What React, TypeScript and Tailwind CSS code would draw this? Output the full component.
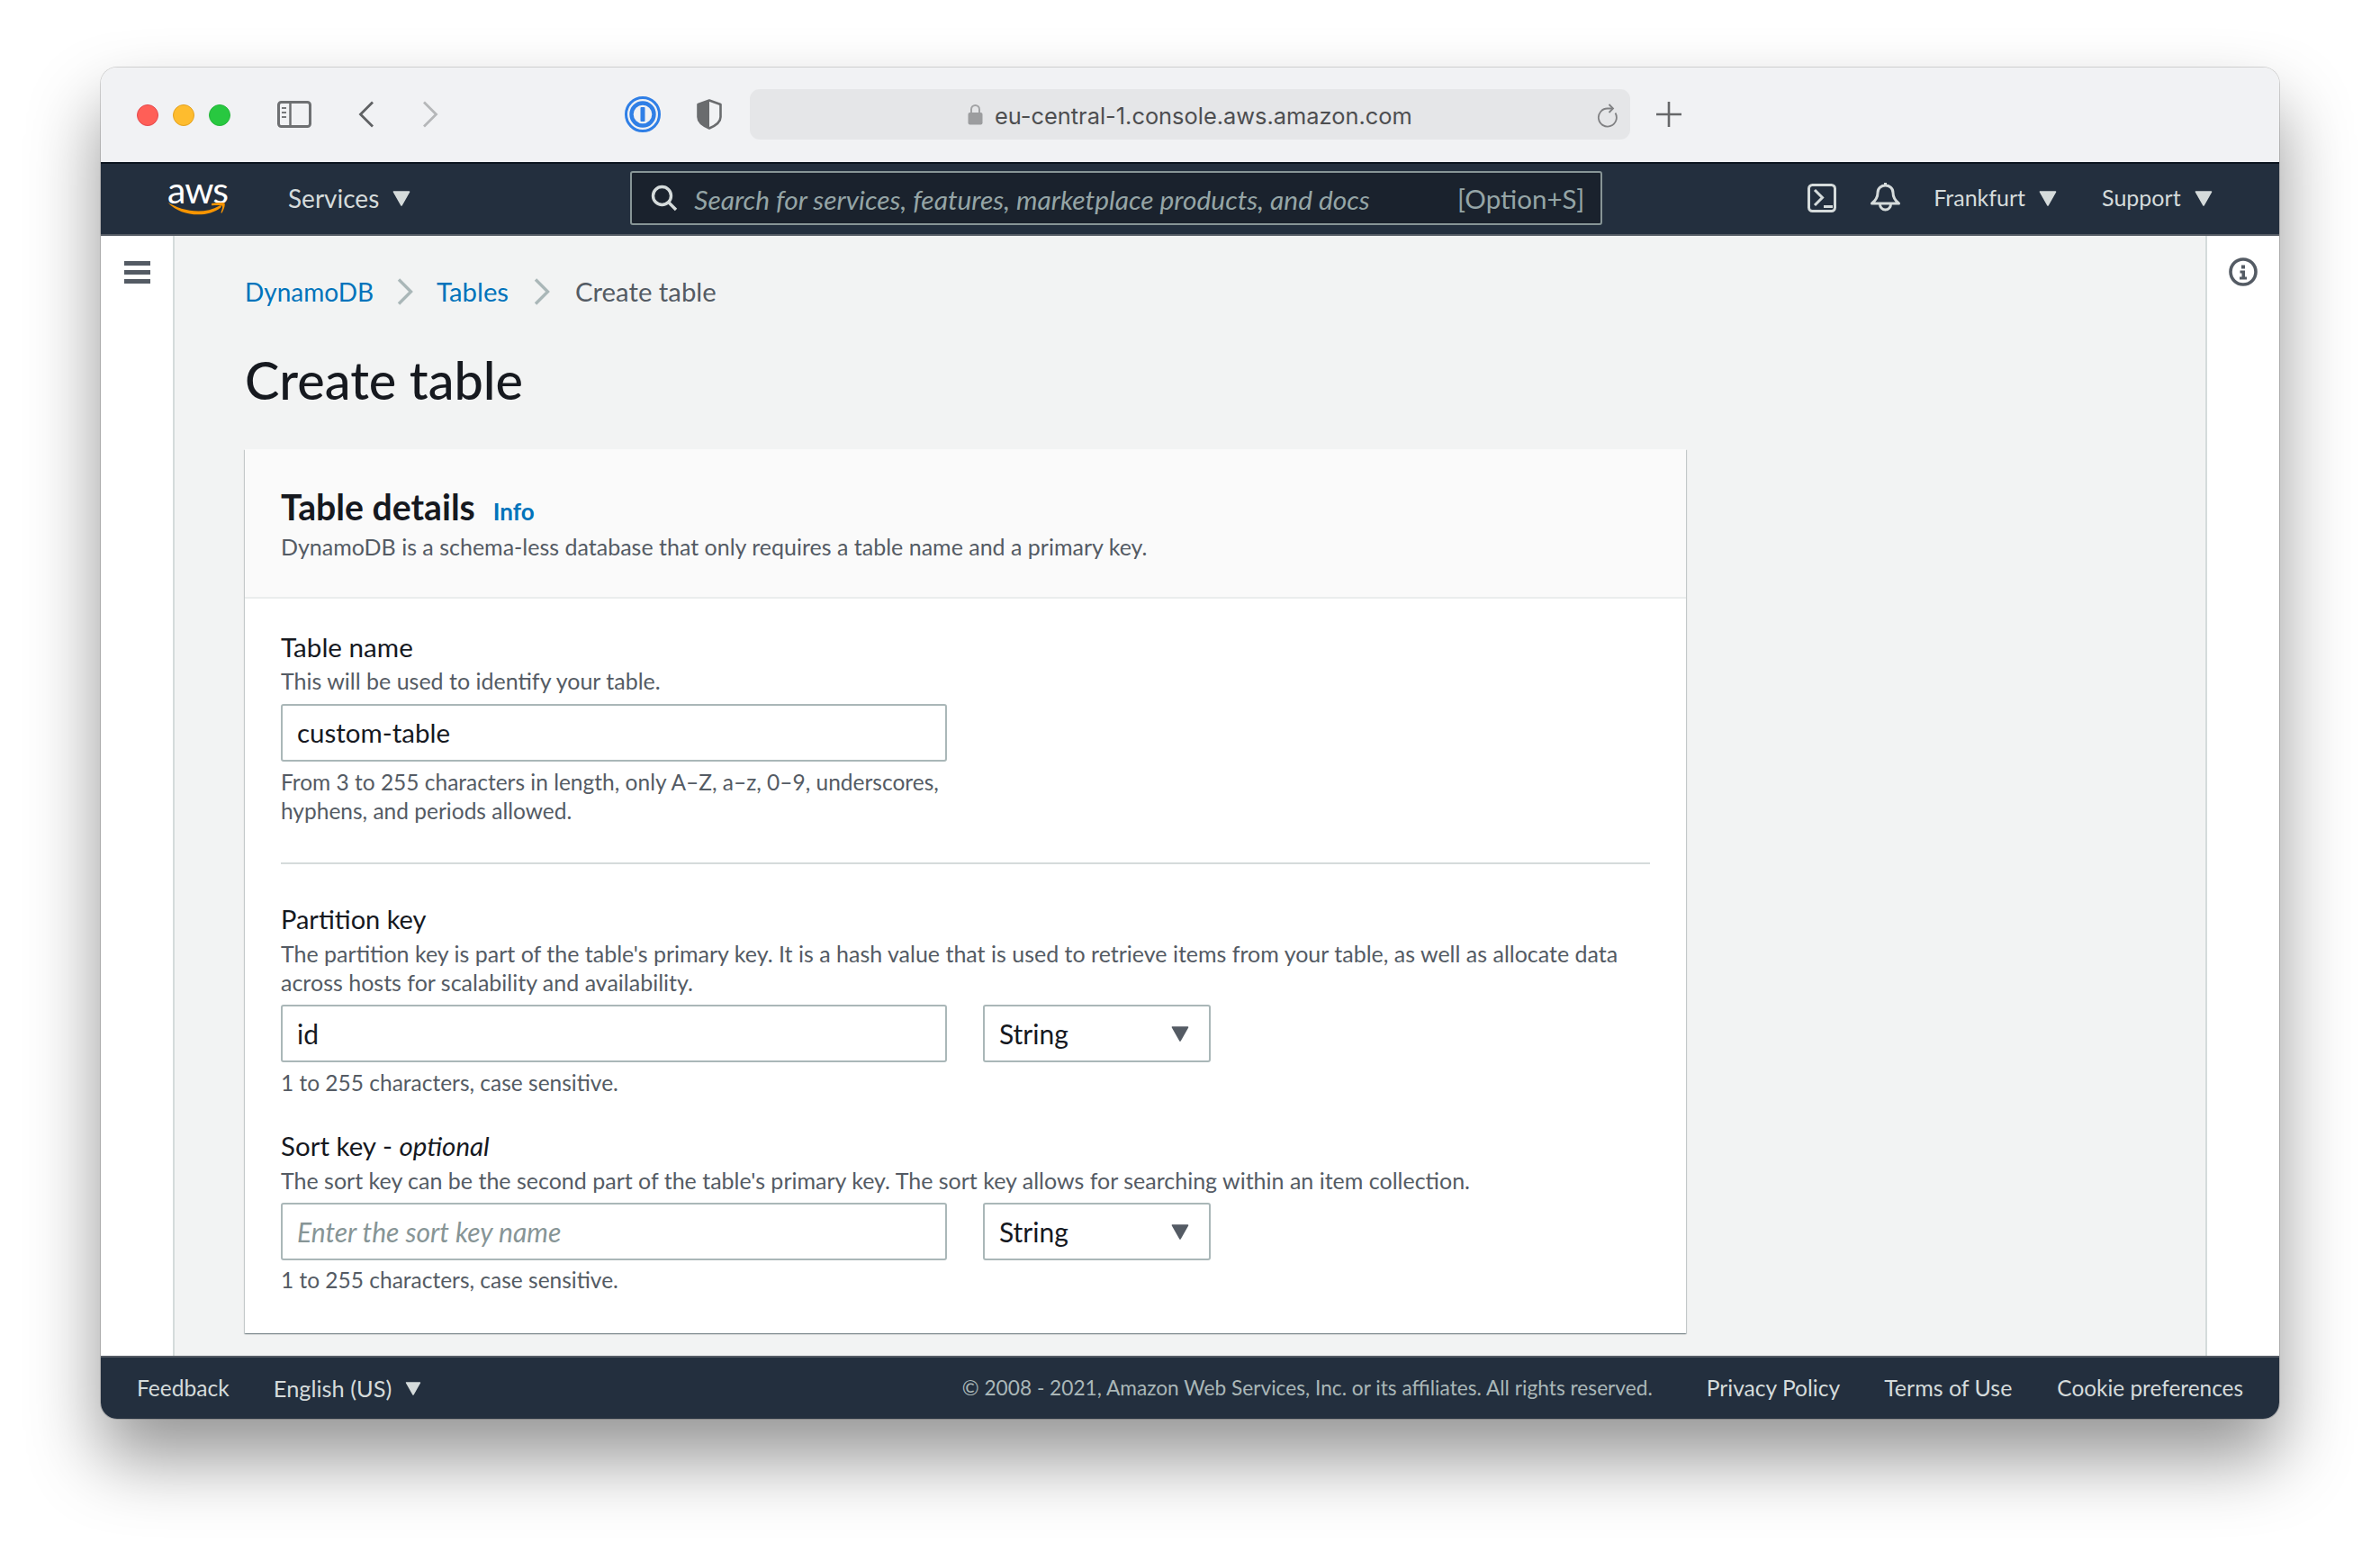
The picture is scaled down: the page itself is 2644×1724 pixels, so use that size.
import React from 'react';

const Caret = ({ className }: { className: string }) => (
  <svg viewBox="0 0 20 17" className={className} fill="currentColor">
    <path d="M1.5 1h17L10 16z" stroke="currentColor" strokeWidth="1.6" strokeLinejoin="round" />
  </svg>
);

const Crumb = () => (
  <svg viewBox="0 0 18 30" className="w-[18px] h-[30px] text-[#aab7b8]" fill="none" stroke="currentColor" strokeWidth="3.4">
    <path d="M2 1.5 15.5 15 2 28.5" />
  </svg>
);

function BrowserBar() {
  return (
    <div className="h-[105px] shrink-0 bg-[#f1f2f4] flex items-center pl-10 pb-[1px]">
      <div className="flex gap-4 mt-[2px]">
        <span className="w-6 h-6 rounded-full bg-[#ff5f57] border border-[#e5484d]" />
        <span className="w-6 h-6 rounded-full bg-[#febc2e] border border-[#e3a11f]" />
        <span className="w-6 h-6 rounded-full bg-[#28c840] border border-[#25b43a]" />
      </div>
      <svg viewBox="0 0 38 30" className="w-[38px] h-[30px] ml-[52px]" fill="none">
        <rect x="1.5" y="1.5" width="35" height="27" rx="3" stroke="#6e7072" strokeWidth="3" />
        <path d="M14.5 2v26" stroke="#6e7072" strokeWidth="2.5" />
        <path d="M5 8h5M5 13h5M5 18h5" stroke="#77797b" strokeWidth="2.2" />
      </svg>
      <svg viewBox="0 0 18 30" className="w-[18px] h-[30px] ml-[52px]" fill="none" stroke="#5f6163" strokeWidth="2.8">
        <path d="M16 1.5 2.5 15 16 28.5" />
      </svg>
      <svg viewBox="0 0 18 30" className="w-[18px] h-[30px] ml-[53px]" fill="none" stroke="#b5b7b9" strokeWidth="2.8">
        <path d="M2 1.5 15.5 15 2 28.5" />
      </svg>
      <svg viewBox="0 0 40 40" className="w-10 h-10 ml-[207px]">
        <circle cx="20" cy="20" r="18.5" fill="none" stroke="#2f7fe6" strokeWidth="3" />
        <circle cx="20" cy="20" r="12.5" fill="none" stroke="#2f7fe6" strokeWidth="4.4" />
        <rect x="17.5" y="12" width="5" height="16" rx="1" fill="#2f7fe6" />
      </svg>
      <svg viewBox="0 0 28 34" className="w-7 h-[34px] ml-10">
        <path d="M14 1.5 26.5 6V20C26.500 26 20 30 14 32.500 8 30 1.500 26 1.500 20V6z" fill="#f1f2f4" stroke="#6a6c6e" strokeWidth="2.6" strokeLinejoin="round" />
        <path d="M14 1.500 1.500 6V20C1.500 26 8 30 14 32.500z" fill="#6a6c6e" />
      </svg>
      <div className="w-[978px] h-14 ml-[31px] rounded-[11px] bg-[#e5e6e8] flex items-center pl-[242px]">
        <svg viewBox="0 0 17 24" className="w-[17px] h-6" fill="none">
          <path d="M4 11V6.500a4.500 4.500 0 0 1 9 0V11" stroke="#a2a3a5" strokeWidth="2" />
          <rect x="0.500" y="10" width="16" height="13.500" rx="2" fill="#9c9d9f" />
        </svg>
        <span className="ml-[13px] mt-[3px] text-[25.4px] leading-8 text-[#4d4e50] font-['Inter',sans-serif]">eu-central-1.console.aws.amazon.com</span>
        <svg viewBox="0 0 24 28" className="w-6 h-7 ml-auto mr-[13px] mt-1" fill="none" stroke="#808183" strokeWidth="1.8">
          <path d="M18 5.500H12A10 10 0 1 0 20.500 10.500" />
          <path d="M13.500 1 18 5.500 13.500 10" />
        </svg>
      </div>
      <svg viewBox="0 0 28 28" className="w-7 h-7 ml-[29px]" stroke="#666769" strokeWidth="2.600">
        <path d="M14 0v28M0 14h28" />
      </svg>
    </div>
  );
}

function ConsoleNav() {
  return (
    <div className="h-[82px] shrink-0 bg-[#232f3e] border-t-2 border-t-[#0c1520] border-b-2 border-b-[#545b64] pb-[2px] flex items-center text-[#d5dbdb] text-[25px] font-['Lato',sans-serif]">
      <div className="ml-[74px] w-[66px] relative h-[42px]">
        <span className="block text-center text-white text-[41px] leading-[24px] tracking-[-1px]">aws</span>
        <svg viewBox="0 0 66 18" className="absolute left-0 bottom-0 w-[66px] h-[18px]" fill="#f79400">
          <path d="M0.500 2C14 10 38 17 58 5.500c1.500-.8 2.500 1 1 2.200C46 18.500 16 19 0.500 2z" />
          <path d="M49 3c5-1 11-1.400 14.500-.5 1 2.500-1 8-3 11-.6.5-1.200 0-.9-.7 1-2.800 2-6 1.200-7-.8-1-6-.9-11.600-.5z" />
        </svg>
      </div>
      <span className="ml-[68px] text-[28px]">Services</span>
      <Caret className="w-5 h-[17px] ml-[15px]" />
      <div className="ml-[244px] w-[1080px] h-[60px] bg-[#1a222d] border-2 border-[#879596] rounded-[3px] flex items-center pl-[21px] pr-[18px] italic text-[#95a5a6] text-[29.9px]">
        <svg viewBox="0 0 30 30" className="w-[30px] h-[30px] shrink-0 text-[#d5dbdb]" fill="none" stroke="currentColor" strokeWidth="3.400">
          <circle cx="12.500" cy="12.500" r="10" />
          <path d="M19.500 19.500 28 28" />
        </svg>
        <span className="ml-[18px] mt-[2px]">Search for services, features, marketplace products, and docs</span>
        <span className="ml-auto mt-[2px] not-italic text-[29.5px]">[Option+S]</span>
      </div>
      <svg viewBox="0 0 32 32" className="w-8 h-8 ml-[228px]" fill="none" stroke="currentColor" strokeWidth="3">
        <rect x="1.500" y="1.500" width="29" height="29" rx="4" />
        <path d="M8 7l8.500 8.500L8 24M18 25.500h10" />
      </svg>
      <svg viewBox="0 0 34 34" className="w-[34px] h-[34px] ml-[38px]" fill="none" stroke="currentColor" strokeWidth="3" strokeLinejoin="round">
        <path d="M1.500 23c4.500-3.500 6.500-7 6.500-12C8 6 12 3 16.500 3S25 6 25 11c0 5 2 8.500 6.500 12zM16.500 0v3M10.500 24a6 6 0 0 0 12 0" />
      </svg>
      <span className="ml-[36px]">Frankfurt</span>
      <Caret className="w-5 h-[17px] ml-[15px]" />
      <span className="ml-[50px]">Support</span>
      <Caret className="w-5 h-[17px] ml-[15px]" />
    </div>
  );
}

function Field({ value, placeholder }: { value?: string; placeholder?: string }) {
  return (
    <div className="flex mt-[9px] gap-10">
      <div className="w-[740px] h-16 border-2 border-[#aab7b8] rounded-[3px] flex items-center px-4 text-[30px]">
        {value ? <span className="text-[#16191f]">{value}</span> : <span className="italic text-[#879596]">{placeholder}</span>}
      </div>
      <div className="w-[253px] h-16 border-2 border-[#aab7b8] rounded-[3px] flex items-center justify-between pl-4 pr-[22px] text-[30px] text-[#16191f]">
        String
        <Caret className="w-5 h-[17px] text-[#545b64]" />
      </div>
    </div>
  );
}

function TableDetails() {
  return (
    <div className="w-[1601px] mt-[45px] bg-white shadow-[0_1px_1px_0_rgba(0,28,36,0.3),1px_1px_1px_0_rgba(0,28,36,0.15),-1px_1px_1px_0_rgba(0,28,36,0.15)] text-[#545b64] text-[25px] leading-8">
      <div className="h-[166px] bg-[#fafafa] border-b-2 border-[#eaeded] px-10 pt-[42px]">
        <div className="flex items-baseline h-11 leading-[44px]">
          <h2 className="text-[39.2px] font-bold text-[#16191f]">Table details</h2>
          <a className="ml-[20px] text-[26px] font-bold text-[#0073bb]">Info</a>
        </div>
        <p className="mt-[6px]">DynamoDB is a schema-less database that only requires a table name and a primary key.</p>
      </div>
      <div className="px-10 pt-9 pb-[43px]">
        <div className="text-[29.6px] leading-9 text-[#16191f]">Table name</div>
        <p className="mt-[3px]">This will be used to identify your table.</p>
        <div className="w-[740px] h-16 mt-[10px] border-2 border-[#aab7b8] rounded-[3px] flex items-center px-4 text-[29.5px] text-[#16191f]">custom-table</div>
        <p className="mt-[7px] text-[24.5px]">From 3 to 255 characters in length, only A–Z, a–z, 0–9, underscores,<br />hyphens, and periods allowed.</p>
        <div className="mt-[41px] h-[2px] bg-[#d5dbdb]" />
        <div className="mt-[43px] text-[29px] leading-9 text-[#16191f]">Partition key</div>
        <p className="mt-1">The partition key is part of the table's primary key. It is a hash value that is used to retrieve items from your table, as well as allocate data<br />across hosts for scalability and availability.</p>
        <Field value="id" />
        <p className="mt-[7px] text-[24.5px]">1 to 255 characters, case sensitive.</p>
        <div className="mt-9 text-[29.5px] leading-9 text-[#16191f]">Sort key - <i>optional</i></div>
        <p className="mt-1">The sort key can be the second part of the table's primary key. The sort key allows for searching within an item collection.</p>
        <Field placeholder="Enter the sort key name" />
        <p className="mt-[6px] text-[24.5px]">1 to 255 characters, case sensitive.</p>
      </div>
    </div>
  );
}

function Footer() {
  return (
    <div className="h-[70px] shrink-0 bg-[#232f3e] border-t-2 border-[#545b64] flex items-center pl-10 pr-10 text-[24.6px] text-[#d5dbdb]">
      <span>Feedback</span>
      <span className="ml-[49px] text-[25.4px]">English (US)</span>
      <Caret className="w-[18px] h-[15px] ml-[15px]" />
      <span className="ml-auto text-[22.7px] text-[#aab7b8]">© 2008 - 2021, Amazon Web Services, Inc. or its affiliates. All rights reserved.</span>
      <span className="ml-[60px]">Privacy Policy</span>
      <span className="ml-[49px] text-[25px]">Terms of Use</span>
      <span className="ml-[50px] text-[24.4px]">Cookie preferences</span>
    </div>
  );
}

export default function App() {
  return (
    <div className="w-[2644px] h-[1724px] bg-white pt-[75px] pl-[112px] overflow-hidden font-['Lato',sans-serif]">
      <div className="w-[2420px] h-[1501px] flex flex-col rounded-[18px] overflow-hidden shadow-[0_0_0_1px_rgba(0,0,0,0.15),0_44px_80px_rgba(0,0,0,0.42)]">
        <BrowserBar />
        <ConsoleNav />
        <div className="flex-1 flex min-h-0 bg-white">
          <div className="w-20 shrink-0 pt-[28px] flex justify-center">
            <div className="w-[29px] flex flex-col gap-[5px]">
              <span className="h-[5px] bg-[#545b64]" />
              <span className="h-[5px] bg-[#545b64]" />
              <span className="h-[5px] bg-[#545b64]" />
            </div>
          </div>
          <div className="flex-1 min-w-0 bg-[#f2f3f3] border-x-2 border-[#d5dbdb] pl-[78px] pt-[46px] overflow-hidden">
            <div className="flex items-center h-8 text-[29.3px]">
              <a className="text-[#0073bb] text-[28px]">DynamoDB</a>
              <span className="mx-[26px]"><Crumb /></span>
              <a className="text-[#0073bb]">Tables</a>
              <span className="mx-[28px]"><Crumb /></span>
              <span className="text-[#545b64]">Create table</span>
            </div>
            <h1 className="mt-[50px] text-[57.6px] leading-[64px] text-[#16191f] font-medium">Create table</h1>
            <TableDetails />
          </div>
          <div className="w-20 shrink-0 pt-6 pl-6">
            <svg viewBox="0 0 32 32" className="w-8 h-8" fill="none">
              <circle cx="16" cy="16" r="14" stroke="#545b64" strokeWidth="3.600" />
              <path d="M14 8.500h4v4h-4zM12.500 14.500H18v7h2v3h-8v-3h2.500v-4h-2z" fill="#545b64" />
            </svg>
          </div>
        </div>
        <Footer />
      </div>
    </div>
  );
}
